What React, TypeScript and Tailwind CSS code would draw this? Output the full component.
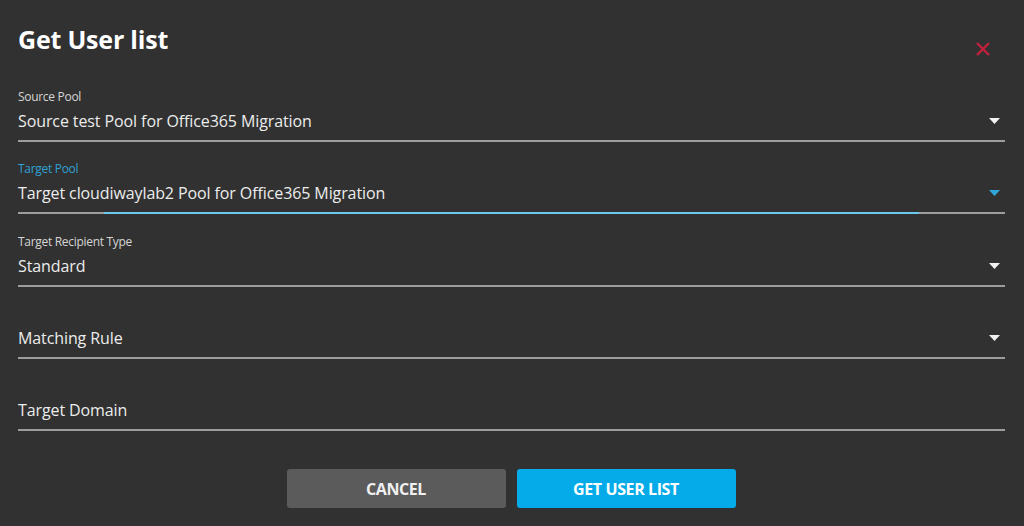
import React from "react";

const font = { fontFamily: '"Open Sans", "Noto Sans", "Liberation Sans", sans-serif' };

function Arrow({ blue }: { blue?: boolean }) {
  return (
    <svg width="11" height="6" viewBox="0 0 11 6" className="shrink-0">
      <path d="M0 0 L11 0 L5.5 6 Z" fill={blue ? "#2fa6dc" : "#f2f2f2"} />
    </svg>
  );
}

function Field({
  label,
  value,
  dropdown,
  focused,
}: {
  label?: string;
  value: string;
  dropdown?: boolean;
  focused?: boolean;
}) {
  return (
    <div className="relative flex flex-col">
      <div
        className={`mt-[1px] h-[14px] text-[12px] leading-[14px] tracking-[-0.3px] ${
          focused ? "text-[#2fa0d4]" : "text-[#d6d6d6]"
        }`}
      >
        {label ?? ""}
      </div>
      <div className="mt-[6px] flex h-[22px] items-center justify-between pr-[5px]">
        <span className="text-[16px] leading-[22px] tracking-[-0.1px] text-[#ececec]">{value}</span>
        {dropdown && <Arrow blue={focused} />}
      </div>
      <div className="mt-[8px] h-[2px] bg-[#9d9d9d]" />
      {focused && (
        <div className="absolute bottom-0 left-[86px] h-[2px] w-[815px] bg-[#6cc8ec]" />
      )}
    </div>
  );
}

export default function App() {
  return (
    <div style={font} className="h-[526px] w-[1024px] overflow-hidden bg-[#313131] pl-[18px] pr-[19px]">
      <div className="flex items-start justify-between pt-[22px]">
        <h1 className="text-[25px] font-bold leading-[34px] tracking-[-0.2px] text-white">Get User list</h1>
        <svg width="16" height="16" viewBox="0 0 16 16" className="mr-[14px] mt-[19px]">
          <path d="M2 2 L14 14 M14 2 L2 14" stroke="#c4213f" strokeWidth="2.4" />
        </svg>
      </div>
      <div className="mt-[32px] flex flex-col gap-[19.25px]">
        <Field label="Source Pool" value="Source test Pool for Office365 Migration" dropdown />
        <Field label="Target Pool" value="Target cloudiwaylab2 Pool for Office365 Migration" dropdown focused />
        <Field label="Target Recipient Type" value="Standard" dropdown />
        <Field value="Matching Rule" dropdown />
        <Field value="Target Domain" />
      </div>
      <div className="mt-[38px] flex justify-center gap-[11px] pr-[1px]">
        <button className="h-[39px] w-[219px] rounded-[3px] bg-[#5b5b5b] text-[16px] font-bold tracking-[-0.4px] text-[#f0f0f0]">
          CANCEL
        </button>
        <button className="h-[39px] w-[219px] rounded-[3px] bg-[#05aae8] text-[16px] font-bold tracking-[-0.4px] text-white">
          GET USER LIST
        </button>
      </div>
    </div>
  );
}
